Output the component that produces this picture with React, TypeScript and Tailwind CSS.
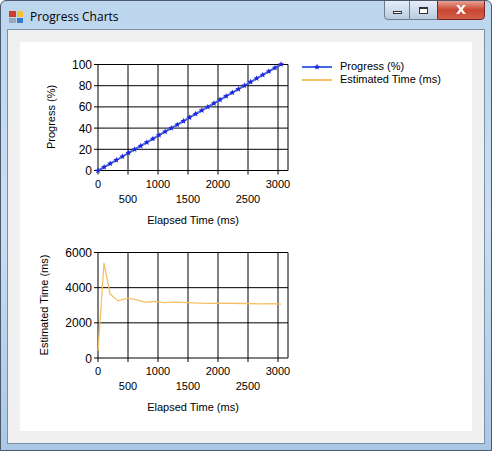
import React from "react";

const X0 = 98;
const XR = 288;
const sx = (t: number) => X0 + t * 0.06;

const progress = Array.from({ length: 31 }, (_, i) => {
  const t = i * 101.7;
  return [sx(t), 170.7 - (t / 3050) * 100 * 1.064];
});

const est: [number, number][] = [
  [0, 400], [100, 5400], [200, 3650], [330, 3250], [500, 3400], [650, 3300],
  [800, 3170], [950, 3220], [1100, 3150], [1300, 3180], [1500, 3150], [1800, 3110],
  [2100, 3120], [2400, 3100], [2700, 3080], [2900, 3090], [3050, 3060],
];

const Star = ({ x, y }: { x: number; y: number }) => {
  const pts: string[] = [];
  for (let i = 0; i < 10; i++) {
    const r = i % 2 === 0 ? 3.2 : 1.4;
    const a = -Math.PI / 2 + (i * Math.PI) / 5;
    pts.push(`${x + r * Math.cos(a)},${y + r * Math.sin(a)}`);
  }
  return <polygon points={pts.join(" ")} fill="#2222dd" />;
};

const XAxis = ({ bottom }: { bottom: number }) => (
  <g fontSize="11" fontFamily="Liberation Sans, Arial, sans-serif" fill="#000">
    {[0, 1000, 2000, 3000].map((t) => (
      <text key={t} x={sx(t)} y={bottom + 17} textAnchor="middle">{t}</text>
    ))}
    {[500, 1500, 2500].map((t) => (
      <text key={t} x={sx(t)} y={bottom + 32} textAnchor="middle">{t}</text>
    ))}
    <text x={193} y={bottom + 53} textAnchor="middle">Elapsed Time (ms)</text>
  </g>
);

const Grid = ({ top, bottom, rows }: { top: number; bottom: number; rows: number }) => (
  <g stroke="#000" strokeWidth="1">
    {Array.from({ length: rows + 1 }, (_, i) => {
      const y = top + ((bottom - top) * i) / rows;
      return <line key={"h" + i} x1={X0 - 4} x2={XR} y1={y} y2={y} />;
    })}
    {[0, 500, 1000, 1500, 2000, 2500, 3000].map((t) => (
      <line key={t} x1={sx(t)} x2={sx(t)} y1={top} y2={bottom + 4} />
    ))}
    <line x1={XR} x2={XR} y1={top} y2={bottom} />
  </g>
);

const Charts = () => (
  <svg width="280" height="388" viewBox="20 42 280 388" className="shrink-0">
    <Grid top={64.5} bottom={170.5} rows={5} />
    <g fontSize="12" fontFamily="Liberation Sans, Arial, sans-serif" textAnchor="end">
      {[100, 80, 60, 40, 20, 0].map((v, i) => (
        <text key={v} x={92} y={64.5 + i * 21.2 + 4.5}>{v}</text>
      ))}
    </g>
    <text x={0} y={0} fontSize="11" fontFamily="Liberation Sans, Arial, sans-serif" textAnchor="middle" transform="translate(55 117) rotate(-90)">Progress (%)</text>
    <polyline points={progress.map((p) => p.join(",")).join(" ")} fill="none" stroke="#4169e1" strokeWidth="2" />
    {progress.map(([x, y], i) => <Star key={i} x={x} y={y} />)}
    <XAxis bottom={170.5} />

    <Grid top={252.5} bottom={358} rows={3} />
    <g fontSize="12" fontFamily="Liberation Sans, Arial, sans-serif" textAnchor="end">
      {[6000, 4000, 2000, 0].map((v, i) => (
        <text key={v} x={92} y={252.5 + i * 35.2 + 4.5}>{v}</text>
      ))}
    </g>
    <text x={0} y={0} fontSize="11" fontFamily="Liberation Sans, Arial, sans-serif" textAnchor="middle" transform="translate(48 305) rotate(-90)">Estimated Time (ms)</text>
    <polyline
      points={est.map(([t, v]) => `${sx(t)},${358 - v * 0.01758}`).join(" ")}
      fill="none" stroke="#f5c065" strokeWidth="1.3"
    />
    <XAxis bottom={358} />
  </svg>
);

const Legend = () => (
  <div className="flex flex-col mt-[18px] ml-[2px] text-[11px] leading-[13px] text-black" style={{ fontFamily: "Liberation Sans, Arial, sans-serif" }}>
    <div className="flex items-center gap-[8px]">
      <svg width="30" height="10">
        <line x1="0" x2="30" y1="5" y2="5" stroke="#4169e1" strokeWidth="2" />
        <Star x={15} y={5} />
      </svg>
      <span>Progress (%)</span>
    </div>
    <div className="flex items-center gap-[8px]">
      <svg width="30" height="10">
        <line x1="0" x2="30" y1="5" y2="5" stroke="#f5c065" strokeWidth="2" />
      </svg>
      <span>Estimated Time (ms)</span>
    </div>
  </div>
);

export default function App() {
  return (
    <div className="w-[492px] h-[451px] bg-gradient-to-b from-[#bcd6ee] via-[#c9def2] to-[#aac8e6] border border-[#4a5a6c] rounded-t-[6px] flex flex-col overflow-hidden">
      <div className="h-[28px] flex items-start shrink-0 relative">
        <div className="flex items-center pl-[8px] pt-[7px] gap-[7px]">
          <div className="w-[14px] h-[12px] grid grid-cols-2 gap-[1px]">
            <div className="bg-[#d13b2a]" />
            <div className="bg-[#f5c232]" />
            <div className="bg-[#9aa8b8]" />
            <div className="bg-[#3c78d0]" />
          </div>
          <span className="text-[12px] text-black" style={{ fontFamily: "'Open Sans', 'Noto Sans', sans-serif" }}>Progress Charts</span>
        </div>
        <div className="absolute right-[6px] top-[-1px] flex">
          <div className="w-[26px] h-[20px] border border-[#6d7d90] rounded-bl-[4px] bg-gradient-to-b from-[#e6eef8] to-[#b8cbe0] flex items-center justify-center">
            <div className="w-[9px] h-[3px] border border-[#333] bg-white mt-[5px]" />
          </div>
          <div className="w-[27px] h-[20px] border-y border-[#6d7d90] bg-gradient-to-b from-[#e6eef8] to-[#b8cbe0] flex items-center justify-center">
            <div className="w-[9px] h-[7px] border border-[#333] border-t-2 bg-white" />
          </div>
          <div className="w-[48px] h-[20px] border border-[#7a2a22] rounded-br-[4px] bg-gradient-to-b from-[#e8a093] via-[#c9452f] to-[#d2604b] flex items-center justify-center text-white font-bold text-[13px]" style={{ fontFamily: "'DejaVu Sans', sans-serif" }}>
            X
          </div>
        </div>
      </div>
      <div className="mx-[6px] h-[415px] border border-[#7d8fa3] bg-[#f0f0f0] p-[12px]">
        <div className="bg-white w-[452px] h-[389px] flex">
          <Charts />
          <Legend />
        </div>
      </div>
    </div>
  );
}
